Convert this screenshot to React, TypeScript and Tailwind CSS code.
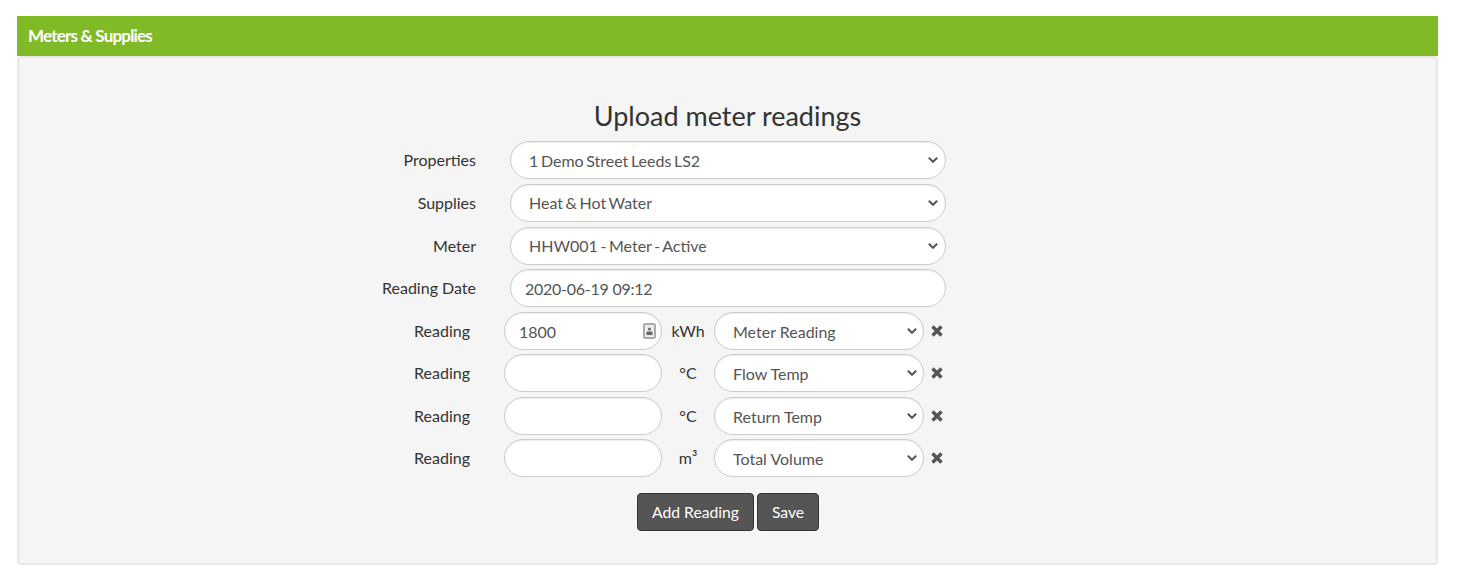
import React from "react";

const boxClass =
  "h-[38px] rounded-[19px] border border-[#ccc] bg-white text-[16px] text-[#555] shadow-[inset_0_1px_1px_rgba(0,0,0,0.075)] outline-none";

function Chevron({ right }: { right: string }) {
  return (
    <svg viewBox="0 0 10 6" className={`pointer-events-none absolute top-[16px] h-[6px] w-[10px] ${right}`} fill="none" stroke="#555" strokeWidth="2">
      <path d="M0.8 0.8 L5 4.8 L9.2 0.8" />
    </svg>
  );
}

function Cross() {
  return (
    <svg viewBox="0 0 14 14" className="h-[14px] w-[14px] text-[#555]" fill="none" stroke="currentColor" strokeWidth="3.4">
      <path d="M2.5 2.5 L11.5 11.5 M11.5 2.5 L2.5 11.5" />
    </svg>
  );
}

function FieldRow({ label, value, mb, nudge }: { label: string; value: string; mb: string; nudge?: boolean }) {
  return (
    <div className={`flex items-center ${mb}`}>
      <label className="w-[107px] text-right text-[16px] text-[#333]">{label}</label>
      <div className="relative ml-[34px] w-[436px]">
        <select
          defaultValue={value}
          className={`w-full appearance-none pl-[18px] pr-6 [word-spacing:-1.5px] ${nudge ? "pt-[2px]" : ""} ${boxClass}`}
        >
          <option>{value}</option>
        </select>
        <Chevron right="right-[8px]" />
      </div>
    </div>
  );
}

function ReadingRow({ unit, type, value, mb }: { unit: string; type: string; value?: string; mb: string }) {
  return (
    <div className={`flex items-center ${mb}`}>
      <label className="w-[101px] text-right text-[16px] text-[#333]">Reading</label>
      <div className="relative ml-[34px] w-[158px]">
        <input defaultValue={value} className={`w-full pl-[14px] pr-3 ${boxClass}`} />
        {value && (
          <svg viewBox="0 0 13 16" className="absolute right-[6px] top-[11px] h-[16px] w-[13px]">
            <rect x="1" y="1" width="11" height="14" rx="1.5" fill="#eee" stroke="#aaa" strokeWidth="2" />
            <circle cx="6.5" cy="6" r="1.5" fill="#666" />
            <rect x="3.5" y="8.5" width="6" height="3.5" fill="#666" />
          </svg>
        )}
      </div>
      <span className="w-[52px] text-center text-[16px] text-[#333]">{unit}</span>
      <div className="relative w-[210px]">
        <select defaultValue={type} className={`w-full appearance-none pl-[18px] pr-6 pt-[2px] ${boxClass}`}>
          <option>{type}</option>
        </select>
        <Chevron right="right-[7px]" />
      </div>
      <span className="ml-[6px] flex w-[14px] items-center">
        <Cross />
      </span>
    </div>
  );
}

export default function App() {
  return (
    <div className="min-h-[575px] bg-white pl-[17px] pr-[20px] pt-4 font-['Lato',sans-serif]">
      <div className="flex h-10 items-center bg-[#80bb27] px-[11px] text-[17px] font-bold tracking-[-0.8px] text-white">
        Meters &amp; Supplies
      </div>
      <div className="h-[509px] rounded-[4px] border-2 border-[#e8e8e8] bg-[#f5f5f5] pt-[42px]">
        <h3 className="mb-[9px] text-center text-[27px] leading-[32px] text-[#333]">Upload meter readings</h3>
        <div className="mx-auto w-[717px]">
          <FieldRow label="Properties" value="1 Demo Street Leeds LS2" mb="mb-[5px]" nudge />
          <FieldRow label="Supplies" value="Heat & Hot Water" mb="mb-[5px]" />
          <FieldRow label="Meter" value="HHW001 - Meter - Active" mb="mb-[4px]" />
          <div className="mb-[5px] flex items-center">
            <label className="w-[107px] text-right text-[16px] text-[#333]">Reading Date</label>
            <input
              defaultValue="2020-06-19 09:12"
              className={`ml-[34px] w-[436px] pl-[14px] tracking-[-0.25px] ${boxClass}`}
            />
          </div>
          <ReadingRow unit="kWh" type="Meter Reading" value="1800" mb="mb-[4px]" />
          <ReadingRow unit="°C" type="Flow Temp" mb="mb-[5px]" />
          <ReadingRow unit="°C" type="Return Temp" mb="mb-[4px]" />
          <ReadingRow unit="m³" type="Total Volume" mb="mb-[16px]" />
          <div className="ml-[1px] flex justify-center gap-[3px]">
            <button className="h-[38px] w-[117px] rounded-[4px] border border-[#333] bg-[#555] pt-[1px] text-[15.7px] text-white">
              Add Reading
            </button>
            <button className="h-[38px] w-[62px] rounded-[4px] border border-[#333] bg-[#555] pt-[1px] text-[15.7px] text-white">
              Save
            </button>
          </div>
        </div>
      </div>
    </div>
  );
}
